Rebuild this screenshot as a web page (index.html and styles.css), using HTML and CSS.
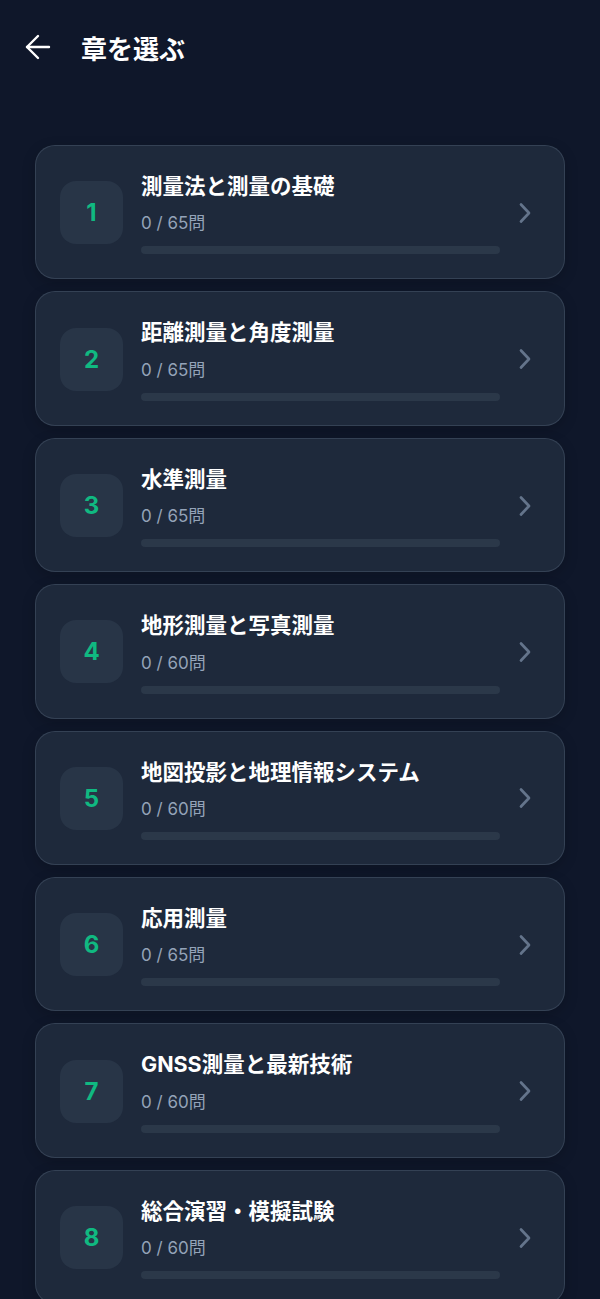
FILE: index.html
```html
<!DOCTYPE html>
<html lang="ja">
<head>
<meta charset="utf-8">
<title>章を選ぶ</title>
<link rel="stylesheet" href="styles.css">
</head>
<body>
<header class="topbar">
  <svg class="back" width="28" height="28" viewBox="0 0 28 28" fill="none" stroke="#ffffff" stroke-width="2.4" stroke-linecap="round" stroke-linejoin="round"><path d="M14 3 L3 14 L14 25"/><path d="M3 14 H25"/></svg>
  <h1 class="title">章を選ぶ</h1>
</header>
<main class="list">
  <div class="card">
    <div class="num">1</div>
    <div class="body"><div class="name">測量法と測量の基礎</div><div class="count">0 / 65問</div><div class="bar"></div></div>
    <svg class="chev" width="32" height="32" viewBox="0 0 32 32" fill="none" stroke="#64748b" stroke-width="2.7" stroke-linecap="round" stroke-linejoin="round"><path d="M13 7.5 L21 16 L13 24.5"/></svg>
  </div>
  <div class="card">
    <div class="num">2</div>
    <div class="body"><div class="name">距離測量と角度測量</div><div class="count">0 / 65問</div><div class="bar"></div></div>
    <svg class="chev" width="32" height="32" viewBox="0 0 32 32" fill="none" stroke="#64748b" stroke-width="2.7" stroke-linecap="round" stroke-linejoin="round"><path d="M13 7.5 L21 16 L13 24.5"/></svg>
  </div>
  <div class="card">
    <div class="num">3</div>
    <div class="body"><div class="name">水準測量</div><div class="count">0 / 65問</div><div class="bar"></div></div>
    <svg class="chev" width="32" height="32" viewBox="0 0 32 32" fill="none" stroke="#64748b" stroke-width="2.7" stroke-linecap="round" stroke-linejoin="round"><path d="M13 7.5 L21 16 L13 24.5"/></svg>
  </div>
  <div class="card">
    <div class="num">4</div>
    <div class="body"><div class="name">地形測量と写真測量</div><div class="count">0 / 60問</div><div class="bar"></div></div>
    <svg class="chev" width="32" height="32" viewBox="0 0 32 32" fill="none" stroke="#64748b" stroke-width="2.7" stroke-linecap="round" stroke-linejoin="round"><path d="M13 7.5 L21 16 L13 24.5"/></svg>
  </div>
  <div class="card">
    <div class="num">5</div>
    <div class="body"><div class="name">地図投影と地理情報システム</div><div class="count">0 / 60問</div><div class="bar"></div></div>
    <svg class="chev" width="32" height="32" viewBox="0 0 32 32" fill="none" stroke="#64748b" stroke-width="2.7" stroke-linecap="round" stroke-linejoin="round"><path d="M13 7.5 L21 16 L13 24.5"/></svg>
  </div>
  <div class="card">
    <div class="num">6</div>
    <div class="body"><div class="name">応用測量</div><div class="count">0 / 65問</div><div class="bar"></div></div>
    <svg class="chev" width="32" height="32" viewBox="0 0 32 32" fill="none" stroke="#64748b" stroke-width="2.7" stroke-linecap="round" stroke-linejoin="round"><path d="M13 7.5 L21 16 L13 24.5"/></svg>
  </div>
  <div class="card">
    <div class="num">7</div>
    <div class="body"><div class="name">GNSS測量と最新技術</div><div class="count">0 / 60問</div><div class="bar"></div></div>
    <svg class="chev" width="32" height="32" viewBox="0 0 32 32" fill="none" stroke="#64748b" stroke-width="2.7" stroke-linecap="round" stroke-linejoin="round"><path d="M13 7.5 L21 16 L13 24.5"/></svg>
  </div>
  <div class="card">
    <div class="num">8</div>
    <div class="body"><div class="name">総合演習・模擬試験</div><div class="count">0 / 60問</div><div class="bar"></div></div>
    <svg class="chev" width="32" height="32" viewBox="0 0 32 32" fill="none" stroke="#64748b" stroke-width="2.7" stroke-linecap="round" stroke-linejoin="round"><path d="M13 7.5 L21 16 L13 24.5"/></svg>
  </div>
</main>
</body>
</html>
```

FILE: styles.css
```css
html, body {
  margin: 0;
  padding: 0;
  background: #0f172a;
}
body {
  font-family: "Inter", "Noto Sans CJK JP", sans-serif;
  color: #ffffff;
  height: 1299px;
  overflow: hidden;
}
.topbar {
  height: 94px;
  display: flex;
  align-items: center;
  padding-left: 24px;
  box-sizing: border-box;
}
.back {
  display: block;
  flex: none;
}
.title {
  margin: 0 0 0 29px;
  font-size: 26px;
  font-weight: 700;
  line-height: 34px;
  font-family: "Noto Sans CJK JP", sans-serif;
  position: relative;
  top: 1px;
}
.list {
  padding: 51px 35px 0;
  display: flex;
  flex-direction: column;
  gap: 12px;
}
.card {
  background: #1e293b;
  border: 1px solid rgba(71, 85, 105, 0.55);
  border-radius: 20px;
  padding: 25px 24px 24px;
  display: flex;
  align-items: center;
  box-shadow: 0 4px 14px rgba(0, 0, 0, 0.18);
}
.num {
  width: 63px;
  height: 63px;
  flex: none;
  border-radius: 16px;
  background: #283547;
  color: #10b981;
  font-weight: 700;
  font-size: 24px;
  display: flex;
  align-items: center;
  justify-content: center;
  margin-right: 18px;
}
.body {
  flex: 1;
  min-width: 0;
}
.name {
  font-family: "Inter", "Noto Sans CJK JP", sans-serif;
  font-size: 21.5px;
  font-weight: 700;
  line-height: 30.4px;
  white-space: nowrap;
}
.count {
  margin-top: 10px;
  font-size: 17px;
  line-height: 24px;
  color: #94a3b8;
}
.bar {
  margin-top: 11px;
  height: 8px;
  border-radius: 4px;
  background: #2b3849;
}
.chev {
  flex: none;
  margin-left: 8px;
  display: block;
}
```
